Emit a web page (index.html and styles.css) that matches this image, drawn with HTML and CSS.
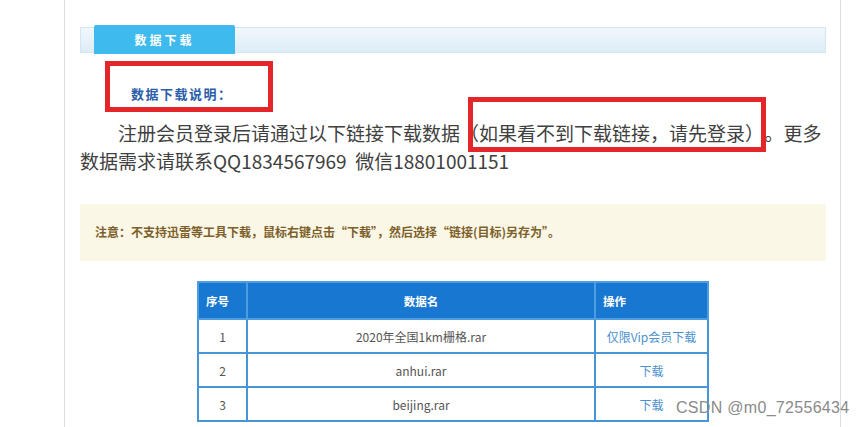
FILE: index.html
```html
<!DOCTYPE html>
<html lang="zh-CN">
<head>
  <meta charset="UTF-8" />
  <meta name="viewport" content="width=device-width, initial-scale=1.0" />
  <title>数据下载</title>
  <link rel="stylesheet" href="styles.css">
</head>
<body>
  <div class="page">
    <!-- section title bar with tab -->
    <div class="title-bar">
      <span class="title-tab">数据下载</span>
    </div>

    <div class="note-title">数据下载说明：</div>

    <p class="intro">注册会员登录后请通过以下链接下载数据<span class="mark">（如果看不到下载链接，请先登录）</span>。更多数据需求请联系QQ1834567969&nbsp;&nbsp;微信18801001151</p>

    <div class="notice">注意：不支持迅雷等工具下载，鼠标右键点击“下载”，然后选择“链接(目标)另存为”。</div>

    <table class="files">
      <thead>
        <tr>
          <th class="col-no">序号</th>
          <th class="col-name">数据名</th>
          <th class="col-op">操作</th>
        </tr>
      </thead>
      <tbody>
        <tr>
          <td>1</td>
          <td>2020年全国1km栅格.rar</td>
          <td><a href="#">仅限Vip会员下载</a></td>
        </tr>
        <tr>
          <td>2</td>
          <td>anhui.rar</td>
          <td><a href="#">下载</a></td>
        </tr>
        <tr>
          <td>3</td>
          <td>beijing.rar</td>
          <td><a href="#">下载</a></td>
        </tr>
      </tbody>
    </table>
  </div>

  <div class="watermark">CSDN @m0_72556434</div>
</body>
</html>
```

FILE: styles.css
```css
body {
  margin: 0;
  background: #fff;
  font-family: "Noto Sans CJK SC", "Noto Sans", sans-serif;
  overflow: hidden;
}
.page {
  margin-left: 64px;
  width: 777px;
  min-height: 427px;
  padding: 27px 14px 0 15px;
  box-sizing: border-box;
  border-left: 1px solid #dedede;
  border-right: 1px solid #dedede;
}
/* title bar */
.title-bar {
  height: 26px;
  box-sizing: border-box;
  border: 1px solid #d6e6f0;
  background: linear-gradient(#f2f8fc, #dcecf6);
  position: relative;
}
.title-tab {
  position: absolute;
  left: 13px;
  top: -3px;
  width: 141px;
  height: 29px;
  background: #3ebaee;
  border-radius: 2px 2px 0 0;
  color: #fff;
  font-size: 12px;
  font-weight: bold;
  letter-spacing: 3px;
  line-height: 30px;
  text-align: center;
}
/* red annotation boxes */
.note-title {
  margin: 8px 0 0 25px;
  width: 168px;
  height: 51px;
  box-sizing: border-box;
  border: 5px solid #e4262a;
  padding: 19px 0 0 21px;
  color: #2c5ea8;
  font-size: 13px;
  font-weight: bold;
  letter-spacing: 1.5px;
  line-height: 18px;
}
.intro {
  margin: 7px 0 0;
  font-size: 19px;
  line-height: 28px;
  color: #404040;
  text-indent: 2em;
}
.mark {
  position: relative;
  margin-right: 10px;
}
.mark::after {
  content: "";
  position: absolute;
  left: 8px;
  right: -11px;
  top: -22px;
  bottom: -6px;
  border: 5px solid #e4262a;
}
/* notice */
.notice {
  margin-top: 29px;
  height: 57px;
  padding-left: 15px;
  box-sizing: border-box;
  background: #fbf7e7;
  color: #7c5f2a;
  font-size: 12px;
  font-weight: bold;
  line-height: 55px;
}
/* file table */
.files {
  margin: 20px auto 0;
  width: 512px;
  border-collapse: collapse;
  font-size: 12px;
  color: #555;
}
.files th {
  height: 35px;
  background: #1877d0;
  color: #fff;
  font-size: 11.5px;
  font-weight: bold;
  text-align: left;
  padding: 0 7px;
  border: 2px solid #4c9de2;
}
.files th.col-name {
  text-align: center;
}
.col-no { width: 33px; }
.col-op { width: 97px; }
.files td {
  height: 32px;
  padding: 0 4px;
  text-align: center;
  border: 2px solid #4894d8;
}
.files a {
  color: #4a91cf;
  text-decoration: none;
}
.watermark {
  position: absolute;
  left: 676px;
  top: 399px;
  font-family: "Liberation Sans", Arial, sans-serif;
  font-size: 16px;
  color: #8a8a8a;
  letter-spacing: 0.3px;
}
```
